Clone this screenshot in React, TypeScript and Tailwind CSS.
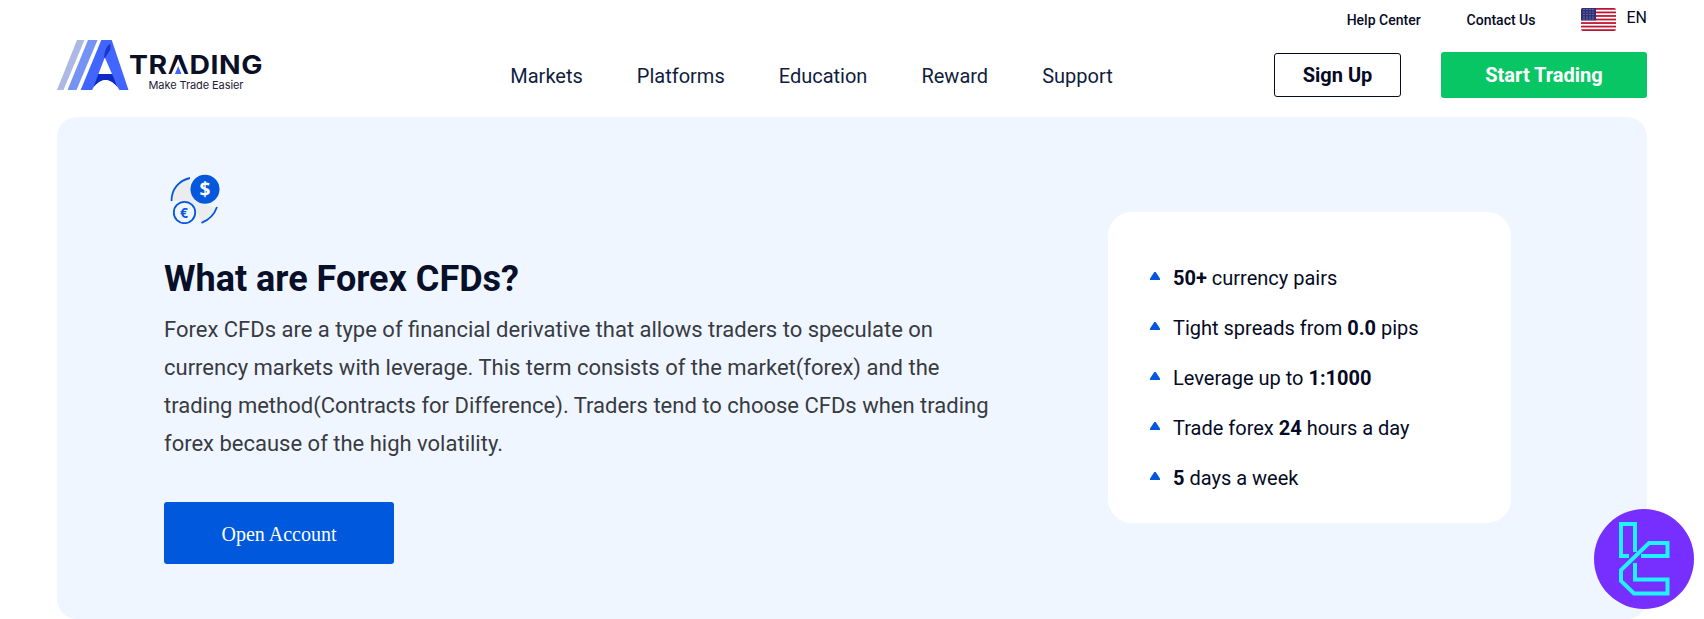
import type { ReactNode } from "react";

const navItems = ["Markets", "Platforms", "Education", "Reward", "Support"];

const features: ReactNode[] = [
  <><b>50+</b> currency pairs</>,
  <>Tight spreads from <b>0.0</b> pips</>,
  <>Leverage up to <b>1:1000</b></>,
  <>Trade forex <b>24</b> hours a day</>,
  <><b>5</b> days a week</>,
];

function Logo() {
  return (
    <svg width="208" height="52" viewBox="57 39 208 52" className="shrink-0">
      <path d="M77 40h7.500L63.500 90h-6.500z" fill="#adb8e4" />
      <path d="M88 40h9.500L76.500 90h-9z" fill="#7592f5" />
      <path d="M97 74h16l5 14q-12.500-16-25 0z" fill="#0d2bc4" />
      <path d="M101.300 40h10.400L128.500 90H119L104.800 57.500 92.300 90H80.700z" fill="#4166ff" />
      <path d="M110.500 43.500q-5.500 3-6.500 14l.8.500 5.700-8.500z" fill="#1a35c9" />
      <path d="M92.300 90q13-20 27 0z" fill="#fff" />
      <text
        x="129"
        y="74"
        textLength="134"
        lengthAdjust="spacingAndGlyphs"
        fontSize="25.500"
        fontWeight="700"
        fill="#0b1026"
        className="font-['Inter'] tracking-[0.5px]"
      >
        TRADING
      </text>
      <path d="M178 59.500l7 15h-14z" fill="#fff" />
      <path d="M178.200 66l3.300 8h-6.600z" fill="#4166ff" />
      <text
        x="148.500"
        y="88.700"
        textLength="95"
        fontSize="11"
        fontWeight="400"
        fill="#1d2136"
        className="font-['Inter']"
      >
        Make Trade Easier
      </text>
    </svg>
  );
}

function UsFlag() {
  const stripes = [0, 2, 4, 6, 8, 10, 12];
  const stars = [2, 5, 8, 11];
  return (
    <svg width="35" height="23" viewBox="0 0 35 23" className="overflow-hidden rounded-xs">
      <rect width="35" height="23" fill="#fff" />
      {stripes.map((s) => (
        <rect key={s} y={(s * 23) / 13} width="35" height={23 / 13} fill="#bf1430" />
      ))}
      <rect width="15" height="12.400" fill="#2f3078" />
      {stars.map((x) =>
        [1.5, 4, 6.5, 9, 11].map((y) => (
          <circle key={`${x}-${y}`} cx={x + 1} cy={y} r="0.500" fill="#b9bce0" />
        ))
      )}
    </svg>
  );
}

function ForexIcon() {
  return (
    <svg width="50" height="50" viewBox="170 174 50 50" fill="none">
      <path d="M172 201q0-18 17-22l3 12 12 13 12 4q-4 11-14 15l-6-12q-5-9-14-10z" fill="#ebecee" />
      <path d="M171.500 201C171.500 189 179 180.500 190 178" stroke="#0558dc" strokeWidth="1.800" />
      <path d="M217 207Q213 218.500 201.500 222.800" stroke="#0558dc" strokeWidth="1.800" />
      <circle cx="205" cy="189.200" r="14.500" fill="#0558dc" />
      <circle cx="184.500" cy="212.500" r="10.700" fill="#f0f6ff" stroke="#0558dc" strokeWidth="1.800" />
      <text x="205" y="196" textAnchor="middle" fontSize="19" fontWeight="700" fill="#fff" className="font-['Noto_Sans']">
        $
      </text>
      <text x="184" y="217.500" textAnchor="middle" fontSize="14" fontWeight="700" fill="#0558dc" className="font-['Noto_Sans']">
        €
      </text>
    </svg>
  );
}

function ChatBadge() {
  return (
    <div className="absolute top-[509px] left-[1594px] size-[100px] rounded-full bg-[#762fff]">
      <svg width="100" height="100" viewBox="0 0 100 100" fill="none" stroke="#1ff3ff" strokeWidth="4">
        <path d="M35 47H27V15H41V43" />
        <path d="M47 47H73.500V34H55L27 61V72L40 84.500H73.500V70.500H41V54" />
      </svg>
    </div>
  );
}

export default function App() {
  return (
    <div className="relative h-[619px] w-[1704px] overflow-hidden bg-white px-[57px] font-['Roboto',sans-serif] text-[#050a25]">
      <header className="flex h-[117px] justify-between">
        <div className="pt-[39px]">
          <Logo />
        </div>
        <nav className="mr-[-84px] flex gap-[54px] pt-[61px] text-xl leading-[30px] text-[#0f1d40]">
          {navItems.map((item) => (
            <a key={item}>{item}</a>
          ))}
        </nav>
        <div className="flex flex-col items-end">
          <div className="flex h-[52px] items-start text-sm font-medium">
            <a className="mt-2.5 mr-[46px] leading-5">Help Center</a>
            <a className="mt-2.5 mr-[46px] leading-5">Contact Us</a>
            <div className="mt-2 mr-2.5">
              <UsFlag />
            </div>
            <span className="mt-2 text-base leading-5 font-normal">EN</span>
          </div>
          <div className="flex items-center gap-10 text-xl font-bold">
            <button className="h-11 w-[127px] rounded-[3px] border border-[#050a25]">Sign Up</button>
            <button className="h-[46px] w-[206px] rounded-[3px] bg-[#09c665] text-white">
              Start Trading
            </button>
          </div>
        </div>
      </header>

      <main className="flex h-[502px] items-start justify-between rounded-[20px] bg-[#f0f6ff] pr-[136px] pl-[107px]">
        <section className="w-[840px] pt-[57px]">
          <div className="ml-1.5">
            <ForexIcon />
          </div>
          <h1 className="mt-[33px] text-4xl leading-[44px] font-bold text-[#080f28]">
            What are Forex CFDs?
          </h1>
          <p className="mt-[10px] text-[22px] leading-[38px] text-[#383b42]">
            Forex CFDs are a type of financial derivative that allows traders to speculate on
            <br />
            currency markets with leverage. This term consists of the market(forex) and the
            <br />
            trading method(Contracts for Difference). Traders tend to choose CFDs when trading
            <br />
            forex because of the high volatility.
          </p>
          <button className="mt-[39px] h-[62px] w-[230px] rounded-[3px] bg-[#0059dc] pt-0.5 font-['Liberation_Serif',serif] text-xl text-white">
            Open Account
          </button>
        </section>

        <ul className="mt-[95px] h-[311px] w-[403px] rounded-3xl bg-white pt-[41px] pl-[42px] text-xl">
          {features.map((feature, i) => (
            <li key={i} className="flex h-[50px] items-center gap-[13px]">
              <svg width="10" height="8" viewBox="0 0 10 8" className="-mt-1 shrink-0">
                <path d="M4.300 0h1.400L10 6.500V8H0V6.500z" fill="#0558dc" />
              </svg>
              <span>{feature}</span>
            </li>
          ))}
        </ul>
      </main>
      <ChatBadge />
    </div>
  );
}
